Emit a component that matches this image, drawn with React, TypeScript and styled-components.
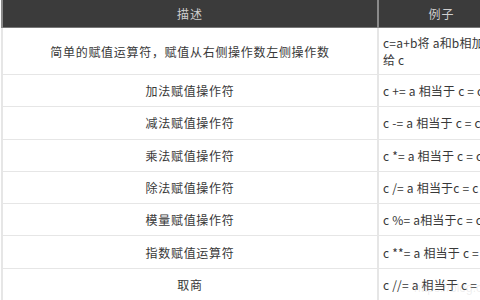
import { Fragment } from 'react';
import styled, { createGlobalStyle } from 'styled-components';

const GlobalStyle = createGlobalStyle`
	html, body {
		margin: 0;
		padding: 0;
		background: #fff;
		overflow: hidden;
	}
	body {
		width: 480px;
		height: 300px;
		font-family: "Noto Sans CJK SC", "Noto Sans", sans-serif;
	}
`;

const Page = styled.div`
	position: relative;
	width: 480px;
	height: 300px;
	overflow: hidden;
`;

const Table = styled.table`
	border-collapse: collapse;
	table-layout: fixed;
	width: 500px;
	margin-left: 1px;
	font-size: 12px;
	color: #383838;
`;

const HeadCell = styled.th<{ $w: number }>`
	width: ${(p) => p.$w}px;
	height: 27px;
	padding: 0;
	background: #3b3b3b;
	color: #cfcfcf;
	font-weight: normal;
	text-align: center;
	letter-spacing: 1px;
	border-left: 2px solid #8a8a8a;
	border-bottom: 1px solid #777;
`;

const Cell = styled.td<{ $align?: string; $spacing?: number }>`
	height: 31.3px;
	padding: 0 4px;
	text-align: ${(p) => p.$align || 'left'};
	letter-spacing: ${(p) => p.$spacing ?? 0}px;
	white-space: nowrap;
	overflow: hidden;
	border-left: 2px solid #e6e6e6;
	border-bottom: 1px solid #e6e6e6;
	line-height: 17px;
	vertical-align: middle;
`;

const Watermark = styled.div`
	position: absolute;
	left: 414px;
	top: 281px;
	font-size: 12px;
	color: rgba(180, 180, 180, 0.22);
	font-family: "Liberation Sans", sans-serif;
	white-space: nowrap;
	pointer-events: none;
`;

const rows: [string, string[]][] = [
	['简单的赋值运算符，赋值从右侧操作数左侧操作数', ['c=a+b将 a和b相加', '给 c']],
	['加法赋值操作符', ['c += a 相当于 c = c + a']],
	['减法赋值操作符', ['c -= a 相当于 c = c - a']],
	['乘法赋值操作符', ['c *= a 相当于 c = c * a']],
	['除法赋值操作符', ['c /= a 相当于c = c / a']],
	['模量赋值操作符', ['c %= a相当于c = c % a']],
	['指数赋值运算符', ['c **= a 相当于 c = c ** a']],
	['取商', ['c //= a 相当于 c = c // a']],
];

const App = () => (
	<Page>
		<GlobalStyle />
		<Table>
			<thead>
				<tr>
					<HeadCell $w={374}>描述</HeadCell>
					<HeadCell $w={125}>例子</HeadCell>
				</tr>
			</thead>
			<tbody>
				{rows.map(([desc, ex], i) => (
					<tr key={i} style={i === 0 ? { height: 47 } : undefined}>
						<Cell $align="center" $spacing={0.7}>{desc}</Cell>
						<Cell $spacing={0.2}>
							{ex.map((line, j) => (
								<Fragment key={j}>
									{j > 0 && <br />}
									{line}
								</Fragment>
							))}
						</Cell>
					</tr>
				))}
			</tbody>
		</Table>
		<Watermark>https://blog.csdn.net</Watermark>
	</Page>
);

export default App;
